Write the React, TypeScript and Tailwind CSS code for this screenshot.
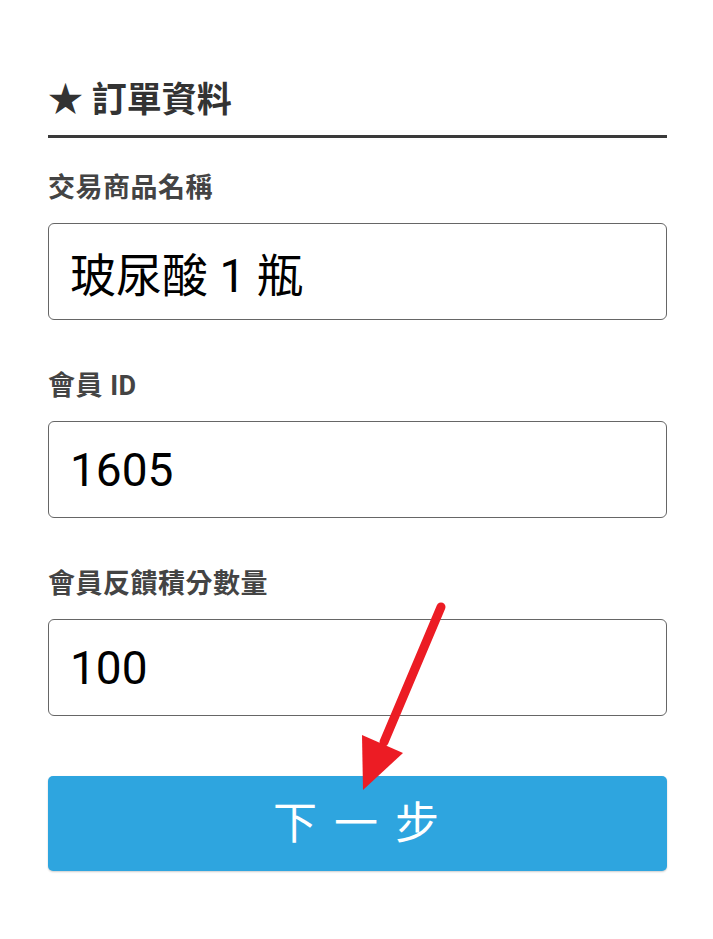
import React from "react";

const fields = [
  { label: "交易商品名稱", value: "玻尿酸 1 瓶" },
  { label: "會員 ID", value: "1605" },
  { label: "會員反饋積分數量", value: "100" },
];

const font = { fontFamily: 'Roboto, "Noto Sans CJK TC", sans-serif' };

export default function App() {
  return (
    <div
      className="relative w-[713px] min-h-[939px] bg-white pl-[48px] pr-[46px] pt-[80px]"
      style={font}
    >
      <h2 className="h-[42px] text-[35px] leading-[42px] font-bold text-[#333]">★ 訂單資料</h2>
      <div className="mt-[13px] h-[3px] bg-[#3a3a3a]" />

      <div className="mt-[34px] flex flex-col gap-[50px]">
        {fields.map((f) => (
          <div key={f.label} className="flex flex-col gap-[19px]">
            <label className="h-[32px] text-[27px] leading-[32px] tracking-[0.5px] font-bold text-[#444]">{f.label}</label>
            <input
              readOnly
              defaultValue={f.value}
              className="h-[97px] w-full rounded-[6px] border border-[#666] bg-white px-[21px] text-[46px] text-black outline-none"
              style={font}
            />
          </div>
        ))}
      </div>

      <button className="mt-[60px] flex h-[95px] w-full items-center justify-center rounded-[5px] bg-[#2ea5df] text-[44px] tracking-[3px] text-white shadow-[0_1px_2px_rgba(0,0,0,0.2)]">
        下 一 步
      </button>

      <svg
        className="pointer-events-none absolute inset-0 h-[939px] w-[713px]"
        viewBox="0 0 713 939"
      >
        <line x1="441" y1="607" x2="384" y2="742" stroke="#ec1c24" strokeWidth="9" strokeLinecap="round" />
        <polygon points="363,790 362,735 403,753" fill="#ec1c24" />
      </svg>
    </div>
  );
}
